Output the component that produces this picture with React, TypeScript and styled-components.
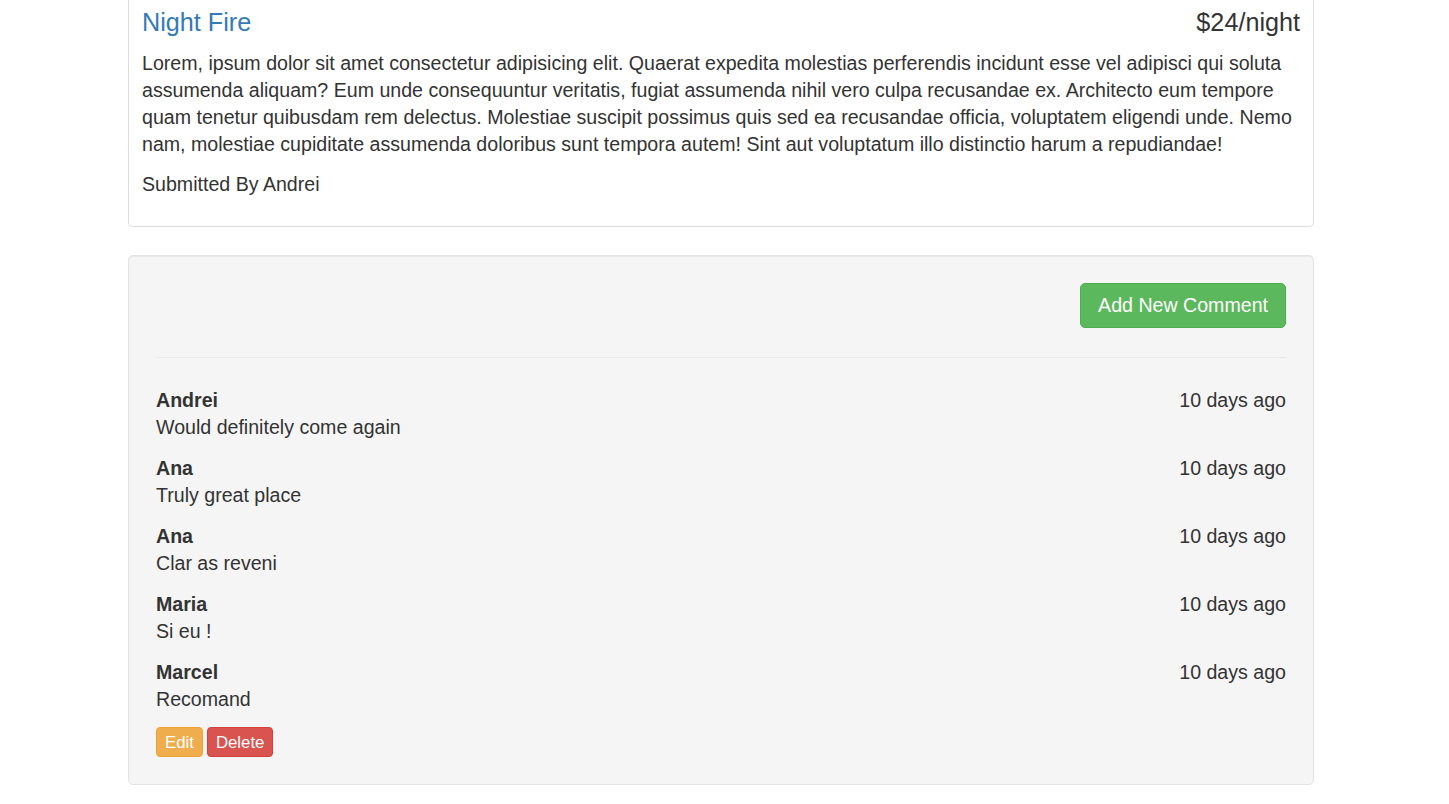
import React from "react";
import styled, { createGlobalStyle } from "styled-components";

const Global = createGlobalStyle`
  html, body { margin: 0; padding: 0; background: #fff; }
  body {
    font-family: "Liberation Sans", Arial, Helvetica, sans-serif;
    font-size: 19.6px;
    line-height: 27px;
    color: #333;
  }
  * { box-sizing: border-box; }
`;

const Container = styled.div`
  width: 1186px;
  margin-left: 128px;
  padding-bottom: 20px;
`;

const Card = styled.div`
  border: 1px solid #ddd;
  border-top: none;
  border-radius: 0 0 5px 5px;
  background: #fff;
  padding: 9px 13px 14.5px;
`;

const TitleRow = styled.div`
  display: flex;
  justify-content: space-between;
  align-items: baseline;
  font-size: 25.2px;
  line-height: 27px;
  font-weight: 500;
  margin-bottom: 13.5px;
`;

const Title = styled.a`
  color: #337ab7;
  text-decoration: none;
`;

const Price = styled.span`
  color: #333;
`;

const Para = styled.p<{ $mb?: number }>`
  margin: 0 0 ${(p) => (p.$mb ?? 13.5)}px;
`;

const Well = styled.div`
  margin-top: 28px;
  background: #f5f5f5;
  border: 1px solid #e3e3e3;
  border-radius: 5px;
  box-shadow: inset 0 1px 1px rgba(0, 0, 0, 0.05);
  padding: 27px 27px 27px;
`;

const ActionRow = styled.div`
  display: flex;
  justify-content: flex-end;
  height: 47px;
`;

const Button = styled.a<{ $variant: "success" | "warning" | "danger"; $size?: "xs" }>`
  display: inline-flex;
  align-items: center;
  justify-content: center;
  text-decoration: none;
  color: #fff;
  border: 1px solid;
  cursor: pointer;
  background: ${(p) =>
    p.$variant === "success" ? "#5cb85c" : p.$variant === "warning" ? "#f0ad4e" : "#d9534f"};
  border-color: ${(p) =>
    p.$variant === "success" ? "#4cae4c" : p.$variant === "warning" ? "#eea236" : "#d43f3a"};
  height: ${(p) => (p.$size === "xs" ? "30px" : "45px")};
  padding: ${(p) => (p.$size === "xs" ? "0 8px" : "0 17px")};
  font-size: ${(p) => (p.$size === "xs" ? "16.8px" : "19.6px")};
  border-radius: ${(p) => (p.$size === "xs" ? "4px" : "5px")};
`;

const Divider = styled.hr`
  border: 0;
  border-top: 1px solid #e9e9e9;
  margin: 26.7px 0 29.5px;
`;

const CommentHead = styled.div`
  display: flex;
  justify-content: space-between;
`;

const Name = styled.strong`
  font-weight: bold;
`;

const ButtonGroup = styled.div`
  display: flex;
  gap: 4px;
`;

const comments = [
  { name: "Andrei", text: "Would definitely come again" },
  { name: "Ana", text: "Truly great place" },
  { name: "Ana", text: "Clar as reveni" },
  { name: "Maria", text: "Si eu !" },
  { name: "Marcel", text: "Recomand", own: true },
];

export default function App() {
  return (
    <>
      <Global />
      <Container>
        <Card>
          <TitleRow>
            <Title href="#">Night Fire</Title>
            <Price>$24/night</Price>
          </TitleRow>
          <Para>
            Lorem, ipsum dolor sit amet consectetur adipisicing elit. Quaerat expedita molestias
            perferendis incidunt esse vel adipisci qui soluta assumenda aliquam? Eum unde
            consequuntur veritatis, fugiat assumenda nihil vero culpa recusandae ex. Architecto eum
            tempore quam tenetur quibusdam rem delectus. Molestiae suscipit possimus quis sed ea
            recusandae officia, voluptatem eligendi unde. Nemo nam, molestiae cupiditate assumenda
            doloribus sunt tempora autem! Sint aut voluptatum illo distinctio harum a repudiandae!
          </Para>
          <Para>Submitted By Andrei</Para>
        </Card>
        <Well>
          <ActionRow>
            <Button $variant="success">Add New Comment</Button>
          </ActionRow>
          <Divider />
          {comments.map((c, i) => (
            <div key={i}>
              <CommentHead>
                <Name>{c.name}</Name>
                <span>10 days ago</span>
              </CommentHead>
              <Para $mb={14}>{c.text}</Para>
              {c.own && (
                <ButtonGroup>
                  <Button $variant="warning" $size="xs">Edit</Button>
                  <Button $variant="danger" $size="xs">Delete</Button>
                </ButtonGroup>
              )}
            </div>
          ))}
        </Well>
      </Container>
    </>
  );
}
